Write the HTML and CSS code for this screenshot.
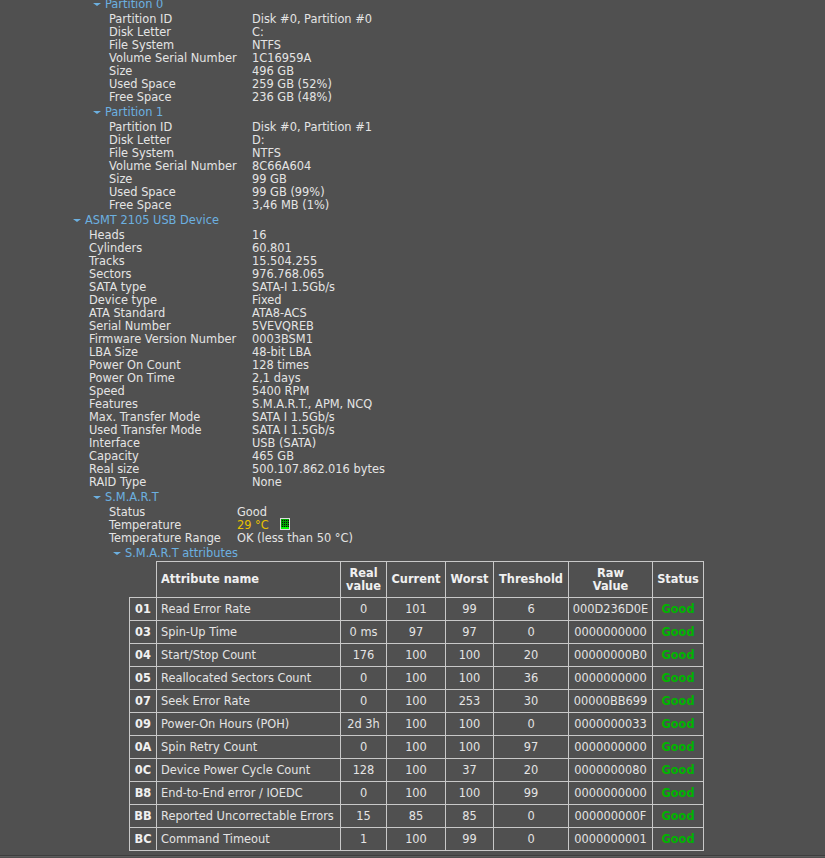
FILE: index.html
```html
<!DOCTYPE html>
<html lang="en">
<head>
<meta charset="utf-8">
<title>Disk info</title>
<link rel="stylesheet" href="styles.css">
</head>
<body>
<main class="page">
  <section class="sec sec-top">
    <h3 class="head indent-2"><span class="caret"></span>Partition 0</h3>
    <dl class="rows rows-part">
      <dt>Partition ID</dt><dd>Disk #0, Partition #0</dd>
      <dt>Disk Letter</dt><dd>C:</dd>
      <dt>File System</dt><dd>NTFS</dd>
      <dt>Volume Serial Number</dt><dd>1C16959A</dd>
      <dt>Size</dt><dd>496 GB</dd>
      <dt>Used Space</dt><dd>259 GB (52%)</dd>
      <dt>Free Space</dt><dd>236 GB (48%)</dd>
    </dl>
  </section>
  <section class="sec">
    <h3 class="head indent-2"><span class="caret"></span>Partition 1</h3>
    <dl class="rows rows-part">
      <dt>Partition ID</dt><dd>Disk #0, Partition #1</dd>
      <dt>Disk Letter</dt><dd>D:</dd>
      <dt>File System</dt><dd>NTFS</dd>
      <dt>Volume Serial Number</dt><dd>8C66A604</dd>
      <dt>Size</dt><dd>99 GB</dd>
      <dt>Used Space</dt><dd>99 GB (99%)</dd>
      <dt>Free Space</dt><dd>3,46 MB (1%)</dd>
    </dl>
  </section>
  <section class="sec">
    <h3 class="head indent-1"><span class="caret"></span>ASMT 2105 USB Device</h3>
    <dl class="rows rows-dev">
      <dt>Heads</dt><dd>16</dd>
      <dt>Cylinders</dt><dd>60.801</dd>
      <dt>Tracks</dt><dd>15.504.255</dd>
      <dt>Sectors</dt><dd>976.768.065</dd>
      <dt>SATA type</dt><dd>SATA-I 1.5Gb/s</dd>
      <dt>Device type</dt><dd>Fixed</dd>
      <dt>ATA Standard</dt><dd>ATA8-ACS</dd>
      <dt>Serial Number</dt><dd>5VEVQREB</dd>
      <dt>Firmware Version Number</dt><dd>0003BSM1</dd>
      <dt>LBA Size</dt><dd>48-bit LBA</dd>
      <dt>Power On Count</dt><dd>128 times</dd>
      <dt>Power On Time</dt><dd>2,1 days</dd>
      <dt>Speed</dt><dd>5400 RPM</dd>
      <dt>Features</dt><dd>S.M.A.R.T., APM, NCQ</dd>
      <dt>Max. Transfer Mode</dt><dd>SATA I 1.5Gb/s</dd>
      <dt>Used Transfer Mode</dt><dd>SATA I 1.5Gb/s</dd>
      <dt>Interface</dt><dd>USB (SATA)</dd>
      <dt>Capacity</dt><dd>465 GB</dd>
      <dt>Real size</dt><dd>500.107.862.016 bytes</dd>
      <dt>RAID Type</dt><dd>None</dd>
    </dl>
  </section>
  <section class="sec">
    <h3 class="head indent-2"><span class="caret"></span>S.M.A.R.T</h3>
    <dl class="rows rows-smart">
      <dt>Status</dt><dd>Good</dd>
      <dt>Temperature</dt>
      <dd class="temp">
        <span class="temp-val">29 °C</span>
        <svg class="gauge" width="10" height="12" viewBox="0 0 10 12" aria-hidden="true">
          <defs>
            <pattern id="dots" x="2" y="2" width="2" height="2" patternUnits="userSpaceOnUse">
              <rect width="1" height="1" fill="#0a0a0a"/>
            </pattern>
          </defs>
          <rect width="10" height="12" fill="#dcdcdc"/>
          <rect x="1" y="1" width="8" height="8" fill="#00a000"/>
          <rect x="1" y="9" width="8" height="2" fill="#00ff00"/>
          <rect x="2" y="2" width="7" height="7" fill="url(#dots)"/>
        </svg>
      </dd>
      <dt>Temperature Range</dt><dd>OK (less than 50 °C)</dd>
    </dl>
  </section>
  <section class="sec">
    <h3 class="head indent-3"><span class="caret"></span>S.M.A.R.T attributes</h3>
    <table class="attrs">
      <colgroup>
        <col class="c-id"><col class="c-name"><col class="c-real"><col class="c-cur"><col class="c-worst"><col class="c-thr"><col class="c-raw"><col class="c-stat">
      </colgroup>
      <thead>
        <tr>
          <td class="blank"></td>
          <th class="left">Attribute name</th><th>Real<br>value</th><th>Current</th><th>Worst</th><th>Threshold</th><th>Raw<br>Value</th><th>Status</th>
        </tr>
      </thead>
      <tbody>
        <tr><th>01</th><td class="left">Read Error Rate</td><td>0</td><td>101</td><td>99</td><td>6</td><td>000D236D0E</td><td class="good">Good</td></tr>
        <tr><th>03</th><td class="left">Spin-Up Time</td><td>0 ms</td><td>97</td><td>97</td><td>0</td><td>0000000000</td><td class="good">Good</td></tr>
        <tr><th>04</th><td class="left">Start/Stop Count</td><td>176</td><td>100</td><td>100</td><td>20</td><td>00000000B0</td><td class="good">Good</td></tr>
        <tr><th>05</th><td class="left">Reallocated Sectors Count</td><td>0</td><td>100</td><td>100</td><td>36</td><td>0000000000</td><td class="good">Good</td></tr>
        <tr><th>07</th><td class="left">Seek Error Rate</td><td>0</td><td>100</td><td>253</td><td>30</td><td>00000BB699</td><td class="good">Good</td></tr>
        <tr><th>09</th><td class="left">Power-On Hours (POH)</td><td>2d 3h</td><td>100</td><td>100</td><td>0</td><td>0000000033</td><td class="good">Good</td></tr>
        <tr><th>0A</th><td class="left">Spin Retry Count</td><td>0</td><td>100</td><td>100</td><td>97</td><td>0000000000</td><td class="good">Good</td></tr>
        <tr><th>0C</th><td class="left">Device Power Cycle Count</td><td>128</td><td>100</td><td>37</td><td>20</td><td>0000000080</td><td class="good">Good</td></tr>
        <tr><th>B8</th><td class="left">End-to-End error / IOEDC</td><td>0</td><td>100</td><td>100</td><td>99</td><td>0000000000</td><td class="good">Good</td></tr>
        <tr><th>BB</th><td class="left">Reported Uncorrectable Errors</td><td>15</td><td>85</td><td>85</td><td>0</td><td>000000000F</td><td class="good">Good</td></tr>
        <tr><th>BC</th><td class="left">Command Timeout</td><td>1</td><td>100</td><td>99</td><td>0</td><td>0000000001</td><td class="good">Good</td></tr>
      </tbody>
    </table>
  </section>
  <div class="bottom-rule"></div>
</main>
</body>
</html>
```
FILE: styles.css
```css
html, body {
  margin: 0;
  height: 858px;
  overflow: hidden;
  background: #505050;
}
.page {
  font-family: "DejaVu Sans", sans-serif;
  font-size: 11.4px;
  line-height: 13px;
  color: #e4e4e4;
}
.sec { margin: 0; }
.sec-top { margin-top: -4px; }
.head {
  margin: 0;
  padding-top: 2px;
  display: flex;
  align-items: center;
  font-size: 11.4px;
  font-weight: normal;
  color: #6cb0e0;
  height: 13px;
  box-sizing: content-box;
}
.indent-1 { padding-left: 73px; }
.indent-2 { padding-left: 93px; }
.indent-3 { padding-left: 113px; }
.caret {
  width: 0;
  height: 0;
  margin-right: 4px;
  border-left: 4px solid transparent;
  border-right: 4px solid transparent;
  border-top: 3px solid #6cb0e0;
}
.rows {
  margin: 0;
  display: grid;
  padding-top: 2px;
  grid-auto-rows: 13px;
}
.rows dt, .rows dd { margin: 0; white-space: nowrap; }
.rows-part { padding-left: 109px; grid-template-columns: 143px 1fr; }
.rows-dev { padding-left: 89px; grid-template-columns: 163px 1fr; }
.rows-smart { padding-left: 109px; grid-template-columns: 128px 1fr; }
.temp { display: flex; align-items: flex-start; }
.temp-val { color: #e8c000; }
.gauge {
  display: block;
  margin: -1px 0 0 11px;
  flex: none;
}
.attrs {
  margin: 1px 0 0 129px;
  border-collapse: collapse;
  table-layout: fixed;
  width: 575px;
  text-align: center;
}
.c-id { width: 27px; }
.c-name { width: 184px; }
.c-real { width: 46px; }
.c-cur { width: 59px; }
.c-worst { width: 48px; }
.c-thr { width: 75px; }
.c-raw { width: 84px; }
.c-stat { width: 51px; }
.attrs td, .attrs th {
  border: 1px solid #c8c8c8;
  padding: 0;
  height: 22px;
  white-space: nowrap;
}
.attrs thead th { height: 35px; }
.attrs th { color: #f0f0f0; font-weight: bold; }
.attrs .left { text-align: left; padding-left: 4px; }
.attrs td.blank { border-top: 0; border-left: 0; }
.attrs .good { color: #00b400; font-weight: bold; }
.bottom-rule {
  margin-top: 4px;
  height: 1px;
  background: #3e3e3e;
  box-shadow: 0 1px 0 #5c5c5c;
}
```
